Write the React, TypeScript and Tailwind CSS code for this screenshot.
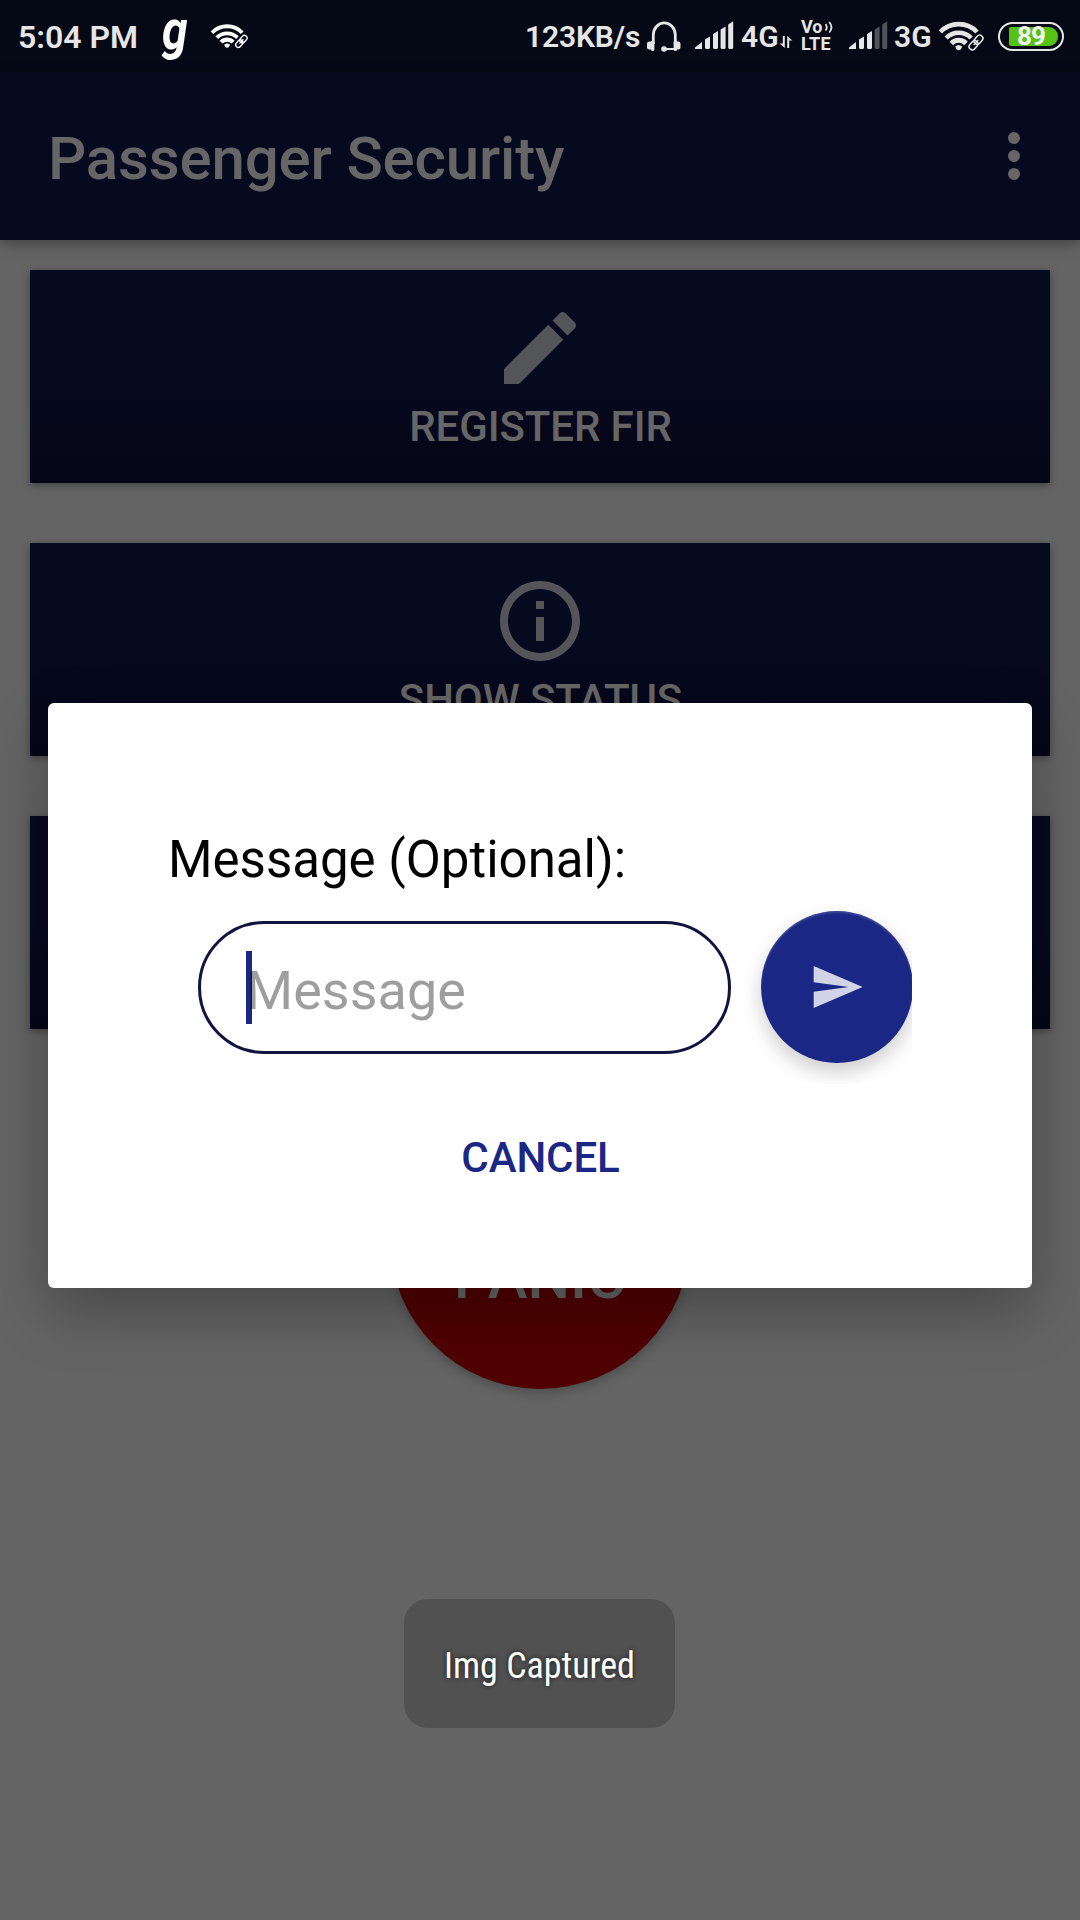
import React from "react";

const INK = "#e6e6e6";

function WifiLink({ className, color = INK }: { className: string; color?: string }) {
  return (
    <svg viewBox="938 20 46 32" className={className} fill="none">
      <path d="M940.4 32 A25.3 25.3 0 0 1 977 32" stroke={color} strokeWidth="4.6" />
      <path d="M946.2 38 A17.5 17.5 0 0 1 971.2 38" stroke={color} strokeWidth="4.6" />
      <path d="M951.4 43.4 A10.3 10.3 0 0 1 966 43.4" stroke={color} strokeWidth="5" />
      <path d="M955.2 46.6 Q958.7 43.6 962.2 46.6 L961 49.2 Q958.7 51.2 956.4 49.2 Z" fill={color} />
      <g transform="rotate(-48 976 42.5)">
        <rect x="966" y="38" width="20" height="9" rx="4.5" fill="#050915" stroke="#050915" strokeWidth="3" />
        <rect x="967.3" y="39.3" width="10" height="6.4" rx="3.2" stroke={color} strokeWidth="1.6" />
        <rect x="974.7" y="39.3" width="10" height="6.4" rx="3.2" stroke={color} strokeWidth="1.6" />
        <path d="M972.5 42.5h7" stroke={color} strokeWidth="1.3" />
      </g>
    </svg>
  );
}

function Signal({ bright, className }: { bright: number; className: string }) {
  const bars = [
    "M2 27.5 9 22V29H2.6Q1.6 29 2 27.5Z",
    "M12 19.5 17 16.6V28L16 29H13L12 28Z",
    "M20 14 25 11V28L24 29H21L20 28Z",
    "M27.6 9.5 32.6 6.5V28L31.6 29H28.6L27.6 28Z",
    "M35.2 4.5 40.2 1.3V28L39.2 29H36.2L35.2 28Z",
  ];
  return (
    <svg viewBox="0 0 42 30" className={className}>
      {bars.map((d, i) => (
        <path key={d} d={d} fill={i < bright ? INK : "#50525b"} />
      ))}
    </svg>
  );
}

function StatusBar() {
  return (
    <header className="flex h-[72px] shrink-0 items-start bg-[#050915] font-medium whitespace-nowrap text-[#e6e6e6]">
      <span className="mt-[18px] ml-[18px] w-[144px] shrink-0 text-[32px] leading-[38px] font-semibold">5:04 PM</span>
      <span className="-mt-[2px] w-[48px] shrink-0 origin-left scale-x-[.84] text-[55px] leading-[64px] font-bold text-white italic">g</span>
      <WifiLink className="mt-[22px] h-[28px] w-[38px] shrink-0" color="#ffffff" />
      <span className="mt-[18px] ml-[277px] w-[122px] shrink-0 text-[30px] leading-[38px] font-semibold tracking-[-0.15px]">123KB/s</span>
      <svg viewBox="0 0 36 32" className="mt-[20px] -ml-px h-8 w-9 shrink-0" fill="none">
        <path d="M7.3 24V15A10.9 12 0 0 1 29.3 15V24" stroke={INK} strokeWidth="2.8" />
        <rect x="1" y="21.5" width="6" height="8" rx="2.2" fill={INK} />
        <rect x="5" y="20.5" width="3.4" height="10.5" rx="1.6" fill={INK} />
        <rect x="29" y="21.5" width="5.5" height="8" rx="2.2" fill={INK} />
        <rect x="27.6" y="20.5" width="3.4" height="10.5" rx="1.6" fill={INK} />
        <path d="M18 29H28" stroke={INK} strokeWidth="2" />
        <circle cx="18" cy="29" r="2.8" fill={INK} />
      </svg>
      <Signal bright={5} className="mt-[20px] ml-[11px] h-[30px] w-[42px] shrink-0" />
      <span className="mt-[18px] ml-[6px] w-[38px] shrink-0 text-[30px] leading-[38px] font-semibold">4G</span>
      <svg viewBox="0 0 14 14" className="mt-[35px] h-3.5 w-3.5 shrink-0" fill={INK}>
        <path d="M3.8 1H5.8V13L0.6 8.4H3.8Z" />
        <path d="M8.2 1 13.4 5.6H10.2V13H8.2Z" />
      </svg>
      <div className="mt-[19px] ml-[8px] flex w-[46px] shrink-0 flex-col">
        <div className="flex h-[16px] items-center">
          <span className="w-[23px] text-[18px] leading-[16px] font-bold">Vo</span>
          <svg viewBox="0 0 10 14" className="h-3.5 w-2.5" fill="none" stroke={INK} strokeWidth="1.8">
            <path d="M1.6 4Q3.9 7.3 1.6 10.5M5.2 2Q9.8 7.3 5.2 12.5" />
          </svg>
        </div>
        <span className="text-[18px] leading-[17px] font-bold tracking-[0.3px]">LTE</span>
      </div>
      <Signal bright={3} className="mt-[20px] h-[30px] w-[42px] shrink-0" />
      <span className="mt-[18px] ml-[5px] w-[44px] shrink-0 text-[30px] leading-[38px] font-semibold">3G</span>
      <WifiLink className="mt-[20px] h-8 w-[46px] shrink-0" />
      <div className="mt-[22px] ml-[14px] flex h-[29px] w-[66px] shrink-0 items-center rounded-full border-[2.5px] border-[#e6e6e6] pl-[9px]">
        <div className="flex h-[19px] w-[49px] items-center rounded-l-[2px] rounded-r-[9px] bg-[#56c314] pl-[8px] text-[26px] leading-[19px] font-bold tracking-[-0.8px] text-[#f4f4f4]">
          89
        </div>
      </div>
    </header>
  );
}

function AppBar() {
  return (
    <div className="relative flex h-[168px] shrink-0 items-center justify-between bg-[#060a1f] pr-[60px] pl-12 shadow-[0_4px_14px_rgba(0,0,0,0.34)]">
      <h1 className="pt-[5px] text-[60px] leading-[70px] font-medium tracking-[-0.15px] text-[#666666]">Passenger Security</h1>
      <div className="flex flex-col gap-[6px]">
        <i className="size-3 rounded-full bg-[#666666]" />
        <i className="size-3 rounded-full bg-[#666666]" />
        <i className="size-3 rounded-full bg-[#666666]" />
      </div>
    </div>
  );
}

function ActionCard({ label, path }: { label: string; path: string }) {
  return (
    <button className="flex h-[213px] w-full flex-col items-center bg-linear-to-b from-[#060a1f] from-50% to-[#050615] pt-[30px] shadow-[0_2px_8px_rgba(0,0,0,0.36)]">
      <svg viewBox="0 0 24 24" className="size-24" fill="#545559">
        <path d={path} />
      </svg>
      <span className="mt-[6px] pl-px text-[42px] leading-[49px] font-medium tracking-[-0.1px] text-[#666666]">{label}</span>
    </button>
  );
}

const EDIT =
  "M3 17.25V21h3.75L17.81 9.94l-3.75-3.75L3 17.25zM20.71 7.04c.39-.39.39-1.02 0-1.41l-2.34-2.34c-.39-.39-1.02-.39-1.41 0l-1.83 1.83 3.75 3.75 1.83-1.83z";
const INFO =
  "M11 7h2v2h-2zm0 4h2v6h-2zm1-9C6.48 2 2 6.48 2 12s4.48 10 10 10 10-4.48 10-10S17.52 2 12 2zm0 18c-4.41 0-8-3.59-8-8s3.59-8 8-8 8 3.59 8 8-3.59 8-8 8z";

function MessageDialog() {
  return (
    <div
      role="dialog"
      className="absolute top-[703px] left-12 flex h-[585px] w-[984px] flex-col rounded-[6px] bg-white px-[120px] pt-[127px] shadow-[0_24px_60px_rgba(0,0,0,0.28)]"
    >
      <label className="text-[51px] leading-[60px] whitespace-nowrap text-black">Message (Optional):</label>
      <div className="flex h-[194px] items-start overflow-hidden pt-[21px]">
        <div className="relative mt-[10px] ml-[30px] h-[133px] w-[533px] shrink-0 rounded-full border-3 border-[#10143e] pt-[35px] pl-[45px]">
          <i className="absolute top-[27px] left-[45px] h-[73px] w-[6px] bg-[#1a2785]" />
          <span className="relative block text-[54px] leading-[64px] text-black/38">Message</span>
        </div>
        <button className="ml-[30px] flex size-[152px] shrink-0 items-center justify-center rounded-full bg-[#1a2785] shadow-[0_9px_20px_rgba(0,0,0,0.2),inset_0_2px_2px_rgba(255,255,255,0.14)]">
          <svg viewBox="0 0 24 24" className="size-[56px]" fill="#d1d3e7">
            <path d="M2.01 21 23 12 2.01 3 2 10l15 2-15 2z" />
          </svg>
        </button>
      </div>
      <button className="mt-[49px] self-center pl-px text-[42px] leading-[49px] font-medium tracking-[-0.1px] text-[#1a2785]">CANCEL</button>
    </div>
  );
}

export default function App() {
  return (
    <div className="relative flex h-[1920px] w-[1080px] flex-col overflow-hidden bg-[#646464] font-['Roboto',sans-serif]">
      <StatusBar />
      <AppBar />
      <main className="flex flex-col items-center gap-[60px] px-[30px] pt-[30px]">
        <ActionCard label="REGISTER FIR" path={EDIT} />
        <ActionCard label="SHOW STATUS" path={INFO} />
        <div className="h-[213px] w-full bg-linear-to-b from-[#060a1f] from-50% to-[#050615] shadow-[0_2px_8px_rgba(0,0,0,0.36)]" />
        <button className="flex size-[300px] items-end justify-center rounded-full bg-[#500000] pb-[76px] text-[60px] leading-[70px] font-medium text-[#666666] shadow-[0_4px_12px_rgba(0,0,0,0.24)]">
          PANIC
        </button>
      </main>
      <MessageDialog />
      <div className="absolute top-[1599px] left-[404px] flex h-[129px] w-[271px] items-center justify-center rounded-[24px] bg-[#515151]">
        <span className="pt-[5px] font-['Roboto_Condensed','Roboto',sans-serif] text-[36px] leading-[42px] font-normal whitespace-nowrap text-white [font-stretch:75%] [text-shadow:0_0_5px_rgba(0,0,0,0.7)]">
          Img Captured
        </span>
      </div>
    </div>
  );
}
